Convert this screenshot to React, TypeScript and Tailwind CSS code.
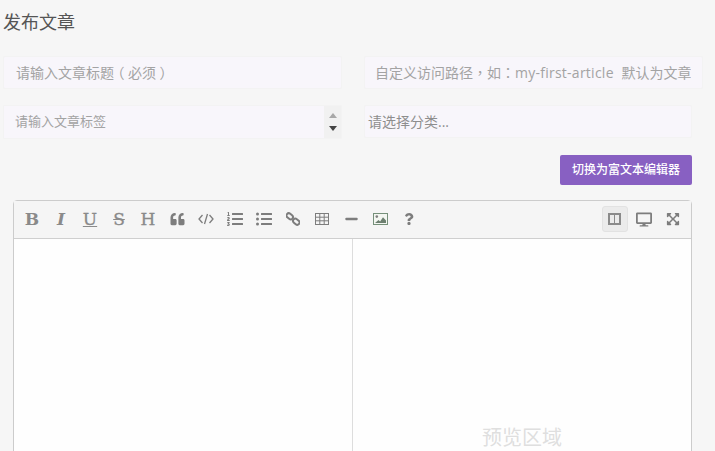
import type { ReactNode } from "react";
import { FaQuoteLeft, FaListOl, FaListUl, FaMinus, FaQuestion, FaDesktop, FaExpandArrowsAlt } from "react-icons/fa";

const font = "font-['Open_Sans','Noto_Sans_CJK_SC',sans-serif]";

function Tool({ children, active }: { children: ReactNode; active?: boolean }) {
  return (
    <div className={`mx-[1.5px] flex h-[26px] w-[26px] items-center justify-center rounded-[3px] border ${active ? "border-[#e2e2e2] bg-[#ebebeb]" : "border-transparent"}`}>
      {children}
    </div>
  );
}

function Glyph({ className, children }: { className: string; children: string }) {
  return <span className={`text-center font-['DejaVu_Serif','Liberation_Serif',serif] text-[17px] leading-none text-[#8a8a8a] ${className}`}>{children}</span>;
}

const Punct = ({ children }: { children: string }) => <span className="font-['Noto_Sans_CJK_TC',sans-serif]">{children}</span>;
const Paren = ({ children }: { children: string }) => <span className="inline-block w-[14px] text-center [font-feature-settings:'halt']">{children}</span>;

export default function App() {
  return (
    <div className={`h-[451px] w-[715px] overflow-hidden bg-[#f6f6f6] [text-spacing-trim:space-all] ${font}`}>
      <h1 className="pl-[3px] pt-[9px] text-[18px] leading-[26px] text-[#555]">发布文章</h1>

      <div className="mt-[21px] flex gap-[22px] pl-[3px]">
        <div className="flex h-[33px] w-[339px] items-center rounded-[2px] border border-[#f3f3f3] bg-[#f8f6fb] pl-[12px] text-[14px] text-[#a3a3a3]">
          <div>请输入文章标题<Paren>（</Paren>必须<Paren>）</Paren></div>
        </div>
        <div className="flex h-[33px] w-[339px] items-center rounded-[2px] border border-[#f3f3f3] bg-[#f8f6fb] pl-[10px] pr-[11px] text-[14px] text-[#a3a3a3]">
          <div className="flex-1 overflow-hidden whitespace-nowrap">自定义访问路径<Punct>，</Punct>如<Punct>：</Punct><span className="tracking-[0.25px]">my-first-article&nbsp;&nbsp;</span>默认为文章</div>
        </div>
      </div>

      <div className="mt-[16px] flex gap-[22px] pl-[3px]">
        <div className="flex h-[34px] w-[339px] items-stretch rounded-[2px] border border-[#f3f3f3] bg-[#f1f1f1]">
          <div className="flex flex-1 items-center bg-[#f8f6fb] pl-[11px] text-[13px] text-[#a3a3a3]">请输入文章标签</div>
          <div className="flex w-[17px] flex-col items-center justify-center gap-[8px]">
            <span className="h-0 w-0 border-x-[4px] border-b-[5px] border-x-transparent border-b-[#a8a8a8]" />
            <span className="h-0 w-0 border-x-[4px] border-t-[5px] border-x-transparent border-t-[#444]" />
          </div>
        </div>
        <div className="flex h-[33px] w-[328px] items-center rounded-[2px] border border-[#f3f3f3] bg-[#f8f6fb] pl-[3px] text-[14px] text-[#8e8e8e]">请选择分类...</div>
      </div>

      <div className="mt-[16px] flex justify-end pr-[23px]">
        <button className="flex h-[30px] w-[132px] items-center justify-center rounded-[2px] bg-[#8860c2] text-[12px] font-medium text-white">切换为富文本编辑器</button>
      </div>

      <div className="ml-[13px] mt-[15px] w-[679px] rounded-t-[4px] border border-[#cccccc] bg-[#fefefe]">
        <div className="flex h-[38px] items-center justify-between border-b border-[#cfcfcf] bg-[#f5f5f5] pb-[1px] pl-[3.5px] pr-[4px] text-[#7d7d7d]">
          <div className="flex items-center">
            <Tool><Glyph className="font-bold">B</Glyph></Tool>
            <Tool><Glyph className="font-bold italic">I</Glyph></Tool>
            <Tool><Glyph className="underline [-webkit-text-stroke:0.3px_#8a8a8a]">U</Glyph></Tool>
            <Tool><Glyph className="line-through [-webkit-text-stroke:0.3px_#8a8a8a]">S</Glyph></Tool>
            <Tool><Glyph className="[-webkit-text-stroke:0.3px_#8a8a8a]">H</Glyph></Tool>
            <Tool><FaQuoteLeft className="h-[14px] w-[15px]" /></Tool>
            <Tool>
              <svg viewBox="0 0 16 12" className="h-[12px] w-[16px]" fill="none" stroke="currentColor" strokeWidth="1.3">
                <path d="M4.5 2 1 6l3.5 4M11.5 2 15 6l-3.5 4M9.5 1 6.5 11" />
              </svg>
            </Tool>
            <Tool><FaListOl className="h-[16px] w-[16px]" /></Tool>
            <Tool><FaListUl className="h-[16px] w-[16px]" /></Tool>
            <Tool>
              <svg viewBox="0 0 14 14" className="h-[14px] w-[14px]" fill="none" stroke="currentColor" strokeWidth="2">
                <rect x="0.2" y="2" width="7" height="4.6" rx="2.3" transform="rotate(40 3.7 4.3)" />
                <rect x="6.8" y="7.4" width="7" height="4.6" rx="2.3" transform="rotate(40 10.3 9.7)" />
              </svg>
            </Tool>
            <Tool>
              <svg viewBox="0 0 14 12" className="h-[12px] w-[14px]" fill="none" stroke="currentColor" strokeWidth="1">
                <rect x="0.5" y="0.5" width="13" height="11" />
                <path d="M0.5 4.2h13M0.5 7.8h13M4.8 0.5v11M9.2 0.5v11" />
              </svg>
            </Tool>
            <Tool><FaMinus className="h-[14px] w-[13px]" /></Tool>
            <Tool>
              <svg viewBox="0 0 15 12" className="h-[12px] w-[15px]">
                <rect x="0.5" y="0.5" width="14" height="11" fill="#f3f6f1" stroke="#76907a" />
                <circle cx="3.8" cy="3.6" r="1.3" fill="#7d7d7d" />
                <path d="M2 10l3.5-3 1.6 1.4L10 4.2l3 3.2V10z" fill="#6d7f70" />
              </svg>
            </Tool>
            <Tool><FaQuestion className="h-[12px] w-[10px]" /></Tool>
          </div>
          <div className="flex items-center">
            <Tool active>
              <span className="flex h-[12px] w-[13px] border-2 border-[#8a8a8a]"><span className="ml-[3.5px] w-[1.5px] bg-[#8a8a8a]" /></span>
            </Tool>
            <Tool><FaDesktop className="h-[15px] w-[16px]" /></Tool>
            <Tool><FaExpandArrowsAlt className="h-[14px] w-[14px]" /></Tool>
          </div>
        </div>
        <div className="flex h-[300px]">
          <div className="w-[339px] border-r border-[#dddddd]" />
          <div className="flex flex-1 justify-center pt-[186px] text-[20px] leading-[26px] text-[#dfdfdf]">预览区域</div>
        </div>
      </div>
    </div>
  );
}
